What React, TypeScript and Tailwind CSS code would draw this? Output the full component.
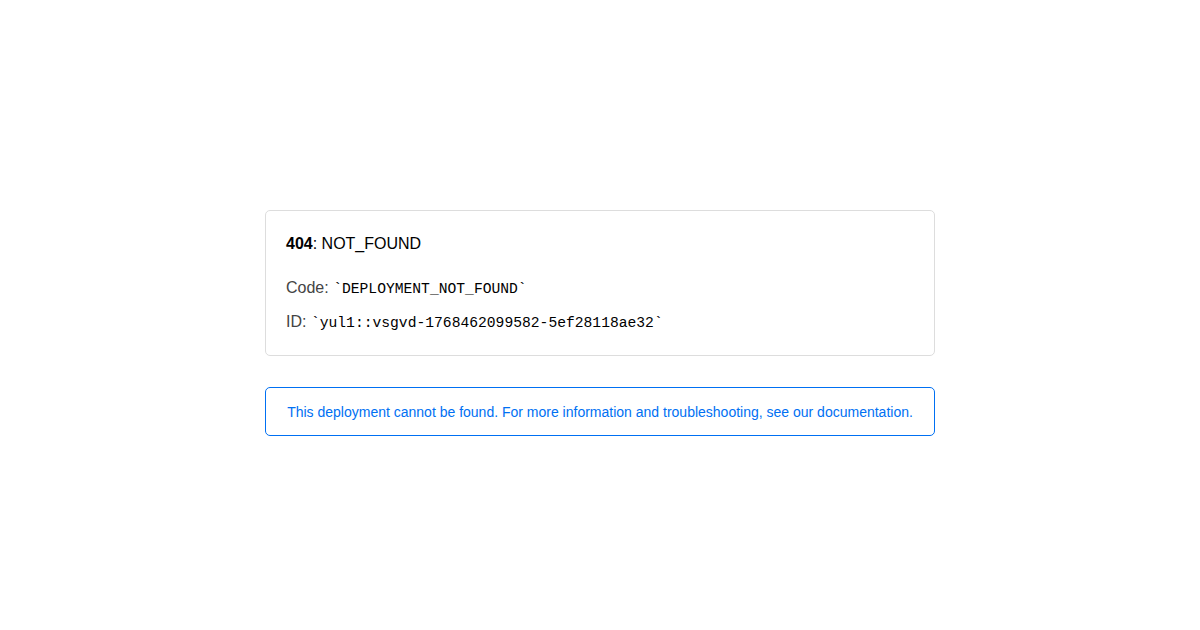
export default function App() {
  return (
    <div className="min-h-[630px] bg-white flex flex-col items-center pt-[210px] font-['Liberation_Sans',Arial,sans-serif]">
      <div className="w-[670px] border border-[#dddddd] rounded-[5px] px-5 pt-[23px] pb-[21px]">
        <p className="text-[16px] leading-5 text-black">
          <strong>404</strong>: NOT_FOUND
        </p>
        <p className="mt-[22px] h-6 text-[16px] leading-6 text-[#444444]">
          Code:{" "}
          <code className="font-['Liberation_Mono',monospace] text-[14.67px] leading-6 text-black">
            `DEPLOYMENT_NOT_FOUND`
          </code>
        </p>
        <p className="mt-[10px] h-6 text-[16px] leading-6 text-[#444444]">
          ID:{" "}
          <code className="font-['Liberation_Mono',monospace] text-[14.67px] leading-6 text-black">
            `yul1::vsgvd-1768462099582-5ef28118ae32`
          </code>
        </p>
      </div>
      <div className="mt-[31px] w-[670px] h-[49px] border border-[#0070f3] rounded-[5px] flex items-center justify-center">
        <p className="text-[14px] leading-5 text-[#0070f3]">
          This deployment cannot be found. For more information and troubleshooting, see our documentation.
        </p>
      </div>
    </div>
  );
}
